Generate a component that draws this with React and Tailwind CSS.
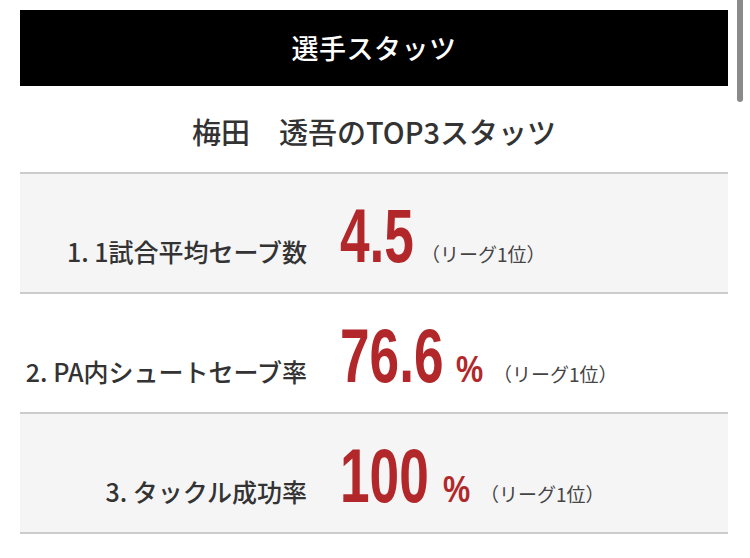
const stats = [
  {
    label: "1. 1試合平均セーブ数",
    value: "4.5",
    valueWidth: "w-[73px]",
    percent: false,
    bg: "bg-[#f5f5f5]",
  },
  {
    label: "2. PA内シュートセーブ率",
    value: "76.6",
    valueWidth: "w-[104px]",
    percent: true,
    bg: "bg-white",
  },
  {
    label: "3. タックル成功率",
    value: "100",
    valueWidth: "w-[91px]",
    percent: true,
    bg: "bg-[#f5f5f5]",
  },
];

const StatRow = ({ stat }) => {
  return (
    <div className={`h-[120px] border-t-2 border-[#cccccc] ${stat.bg} flex items-center pt-[6px]`}>
      <div className="flex items-baseline">
        {/* Label */}
        <div className="w-[287px] text-right text-[25px] font-medium text-[#333333]">
          {stat.label}
        </div>

        {/* Value */}
        <span className={`ml-[33px] inline-block ${stat.valueWidth} font-['Liberation_Sans',sans-serif] font-bold text-[76px] leading-none text-[#b2282a] whitespace-nowrap`}>
          <span className="inline-block origin-left scale-x-[0.7]">{stat.value}</span>
        </span>

        {stat.percent && (
          <span className="ml-[12px] inline-block w-[29px] font-['Liberation_Sans',sans-serif] font-bold text-[36px] leading-none text-[#b2282a]">
            <span className="inline-block origin-left scale-x-[0.85]">%</span>
          </span>
        )}

        {/* Rank */}
        <span className="ml-[8px] text-[19px] text-[#444444] whitespace-nowrap">
          （リーグ1位）
        </span>
      </div>
    </div>
  );
};

export default function App() {
  return (
    <div className="relative w-[750px] h-[558px] bg-white overflow-hidden font-['Noto_Sans_CJK_JP',sans-serif]">
      <div className="ml-[20px] w-[708px] pt-[10px]">
        {/* Header bar */}
        <div className="h-[76px] bg-black flex items-center justify-center">
          <h2 className="text-[27px] font-medium text-white tracking-[0.02em]">選手スタッツ</h2>
        </div>

        {/* Player title */}
        <div className="h-[86px] flex items-center justify-center pt-[6px]">
          <h3 className="text-[29px] font-medium text-[#333333]">梅田　透吾のTOP3スタッツ</h3>
        </div>

        {/* Stats */}
        <div className="border-b-2 border-[#cccccc]">
          {stats.map((stat) => (
            <StatRow key={stat.label} stat={stat} />
          ))}
        </div>
      </div>

      {/* Overlay scrollbar */}
      <div className="absolute top-0 right-[7px] w-[6px] h-[102px] rounded-b-full bg-[#8a8a8a]" />
    </div>
  );
}
